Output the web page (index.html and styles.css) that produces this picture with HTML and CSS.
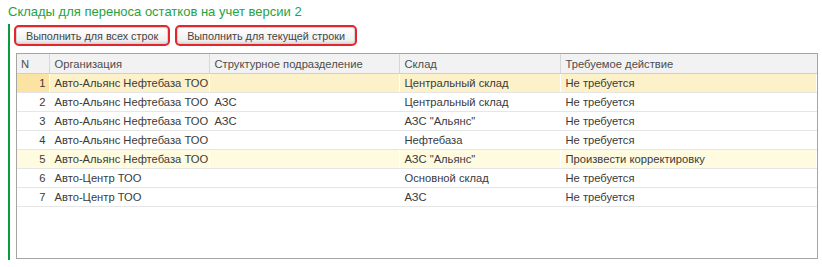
FILE: index.html
```html
<!DOCTYPE html>
<html lang="ru">
<head>
  <meta charset="UTF-8">
  <title>Склады для переноса остатков</title>
  <link rel="stylesheet" href="styles.css">
</head>
<body>
  <div class="title">Склады для переноса остатков на учет версии 2</div>

  <div class="panel">
    <div class="toolbar">
      <button class="btn">Выполнить для всех строк</button>
      <button class="btn">Выполнить для текущей строки</button>
    </div>

    <div class="grid">
      <table>
        <colgroup>
          <col class="c-n">
          <col class="c-org">
          <col class="c-div">
          <col class="c-store">
          <col>
        </colgroup>
        <thead>
          <tr>
            <th>N</th>
            <th>Организация</th>
            <th>Структурное подразделение</th>
            <th>Склад</th>
            <th>Требуемое действие</th>
          </tr>
        </thead>
        <tbody>
          <tr class="current">
            <td class="num">1</td>
            <td>Авто-Альянс Нефтебаза ТОО</td>
            <td></td>
            <td>Центральный склад</td>
            <td>Не требуется</td>
          </tr>
          <tr>
            <td class="num">2</td>
            <td>Авто-Альянс Нефтебаза ТОО</td>
            <td>АЗС</td>
            <td>Центральный склад</td>
            <td>Не требуется</td>
          </tr>
          <tr>
            <td class="num">3</td>
            <td>Авто-Альянс Нефтебаза ТОО</td>
            <td>АЗС</td>
            <td>АЗС "Альянс"</td>
            <td>Не требуется</td>
          </tr>
          <tr>
            <td class="num">4</td>
            <td>Авто-Альянс Нефтебаза ТОО</td>
            <td></td>
            <td>Нефтебаза</td>
            <td>Не требуется</td>
          </tr>
          <tr class="marked">
            <td class="num">5</td>
            <td>Авто-Альянс Нефтебаза ТОО</td>
            <td></td>
            <td>АЗС "Альянс"</td>
            <td>Произвести корректировку</td>
          </tr>
          <tr>
            <td class="num">6</td>
            <td>Авто-Центр ТОО</td>
            <td></td>
            <td>Основной склад</td>
            <td>Не требуется</td>
          </tr>
          <tr>
            <td class="num">7</td>
            <td>Авто-Центр ТОО</td>
            <td></td>
            <td>АЗС</td>
            <td>Не требуется</td>
          </tr>
        </tbody>
      </table>
    </div>
  </div>
</body>
</html>
```

FILE: styles.css
```css
body {
  font-family: "Liberation Sans", Arial, sans-serif;
  margin: 0;
  padding: 0;
  background-color: #ffffff;
  color: #3a3a3a;
}

.title {
  font-size: 13px;
  line-height: 16px;
  color: #27a23f;
  padding: 4px 8px 4px 8px;
}

.panel {
  margin-left: 8px;
  border-left: 2px solid #0c9a3e;
  padding-left: 4px;
  height: 236px;
  box-sizing: border-box;
  padding-top: 1px;
}

.toolbar {
  display: flex;
  gap: 5px;
}

.btn {
  height: 21px;
  padding: 0 10px;
  font-family: inherit;
  font-size: 10.8px;
  color: #444444;
  border: 2px solid #e3262b;
  border-radius: 5px;
  background: linear-gradient(#ffffff, #ececec);
  box-shadow: inset 0 0 0 1px #d4d4d4, inset 0 -2px 2px rgba(0, 0, 0, 0.08);
  cursor: pointer;
}

.grid {
  margin: 7px 0 0 2px;
  width: 802px;
  height: 206px;
  border: 1px solid #a5a5a5;
  box-sizing: border-box;
}

table {
  width: 100%;
  border-collapse: collapse;
  table-layout: fixed;
  font-size: 11.2px;
}

.c-n { width: 32px; }
.c-org { width: 160px; }
.c-div { width: 190px; }
.c-store { width: 161px; }

th {
  height: 19px;
  padding: 0 5px;
  text-align: left;
  font-weight: normal;
  color: #4d4d4d;
  background-color: #f2f2f2;
  border-right: 1px solid #d6d6d6;
  border-bottom: 1px solid #cfcfcf;
  white-space: nowrap;
  overflow: hidden;
}

th:first-child {
  padding-left: 4px;
}

th:last-child {
  border-right: none;
}

td {
  height: 18px;
  padding: 0 5px;
  border-bottom: 1px solid #e6e6e6;
  border-right: 1px solid rgba(255, 255, 255, 0.8);
  white-space: nowrap;
  overflow: hidden;
}

td.num {
  text-align: right;
  padding-right: 3px;
}

tr.current td {
  background-color: #fdf1c9;
}

tr.current td.num {
  background-color: #fbe4a3;
}

tr.marked td {
  background-color: #fefbe0;
}
```
